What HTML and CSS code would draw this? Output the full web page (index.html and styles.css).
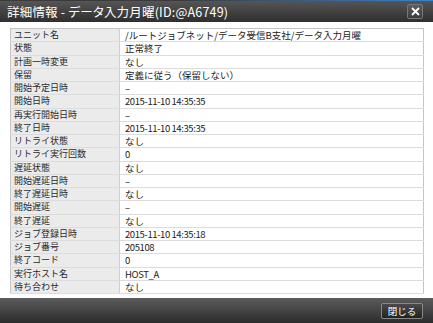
FILE: index.html
```html
<!DOCTYPE html>
<html lang="ja">
<head>
  <meta charset="UTF-8">
  <meta name="viewport" content="width=device-width, initial-scale=1.0">
  <title>詳細情報</title>
  <link rel="stylesheet" href="styles.css">
</head>
<body>
  <div class="dialog">
    <div class="titlebar">
      <span class="title">詳細情報 - データ入力月曜(ID:@A6749)</span>
      <button class="close-x" title="閉じる">
        <svg width="9" height="9" viewBox="0 0 9 9">
          <path d="M1 1 L8 8 M8 1 L1 8" stroke="#fff" stroke-width="1.8"/>
        </svg>
      </button>
    </div>

    <div class="content">
      <table class="detail">
        <tr><th>ユニット名</th><td>/ルートジョブネット/データ受信B支社/データ入力月曜</td></tr>
        <tr><th>状態</th><td>正常終了</td></tr>
        <tr><th>計画一時変更</th><td>なし</td></tr>
        <tr><th>保留</th><td>定義に従う（保留しない）</td></tr>
        <tr><th>開始予定日時</th><td>–</td></tr>
        <tr><th>開始日時</th><td class="num">2015-11-10 14:35:35</td></tr>
        <tr><th>再実行開始日時</th><td>–</td></tr>
        <tr><th>終了日時</th><td class="num">2015-11-10 14:35:35</td></tr>
        <tr><th>リトライ状態</th><td>なし</td></tr>
        <tr><th>リトライ実行回数</th><td class="num">0</td></tr>
        <tr><th>遅延状態</th><td>なし</td></tr>
        <tr><th>開始遅延日時</th><td>–</td></tr>
        <tr><th>終了遅延日時</th><td>なし</td></tr>
        <tr><th>開始遅延</th><td>–</td></tr>
        <tr><th>終了遅延</th><td>なし</td></tr>
        <tr><th>ジョブ登録日時</th><td class="num">2015-11-10 14:35:18</td></tr>
        <tr><th>ジョブ番号</th><td class="num">205108</td></tr>
        <tr><th>終了コード</th><td class="num">0</td></tr>
        <tr><th>実行ホスト名</th><td class="num">HOST_A</td></tr>
        <tr><th>待ち合わせ</th><td>なし</td></tr>
      </table>
    </div>

    <div class="footer">
      <button class="btn-close">閉じる</button>
    </div>
  </div>
</body>
</html>
```

FILE: styles.css
```css
body {
  margin: 0;
  font-family: "Noto Sans CJK JP", "Noto Sans", sans-serif;
  background: #fff;
}
.dialog {
  width: 433px;
  height: 323px;
  display: flex;
  flex-direction: column;
}
.titlebar {
  height: 22px;
  display: flex;
  align-items: center;
  justify-content: space-between;
  padding: 0 10px 0 7px;
  background: linear-gradient(#555, #2f2f2f);
  border-top: 1px solid;
  border-image: linear-gradient(to right, #3a3a3a, #3a3a3a 40%, #3f80c4) 1;
  box-sizing: border-box;
}
.title {
  color: #fff;
  font-size: 12.5px;
  font-feature-settings: "palt";
  letter-spacing: 0.2px;
}
.close-x {
  width: 16px;
  height: 15px;
  padding: 0;
  display: flex;
  align-items: center;
  justify-content: center;
  background: linear-gradient(#5e5e5e, #3c3c3c);
  border: 1px solid #777;
  border-radius: 2px;
}
.content {
  flex: 1;
  padding: 6px 9px 0 10px;
}
.detail {
  width: 100%;
  border-collapse: collapse;
  border: 1px solid #c4c4c4;
  color: #222;
}
.detail tr {
  height: 13.25px;
}
.detail th,
.detail td {
  padding: 0 4px 0 3px;
  border-bottom: 1px solid #dcdcdc;
  text-align: left;
  font-weight: normal;
  line-height: 12px;
  white-space: nowrap;
}
.detail th {
  width: 101px;
  font-size: 9px;
  background: #ebebeb;
  border-right: 1px solid #cfcfcf;
  color: #2a2a2a;
}
.detail td {
  font-size: 9.5px;
  padding-left: 5px;
}
.detail td.num {
  letter-spacing: -0.4px;
}
.footer {
  height: 25px;
  display: flex;
  align-items: center;
  justify-content: flex-end;
  padding-right: 10px;
  background: linear-gradient(#5c5c5c, #2c2c2c);
}
.btn-close {
  width: 42px;
  height: 16px;
  padding: 0;
  font-family: inherit;
  font-size: 9.5px;
  color: #fff;
  background: linear-gradient(#4a4a4a, #222);
  border: 1px solid #888;
  border-radius: 2px;
}
```
